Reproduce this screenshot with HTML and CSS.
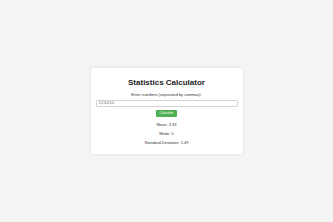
FILE: index.html
```html
<!DOCTYPE html>
<html lang="en">
<head>
<meta charset="utf-8">
<title>Statistics Calculator</title>
<link rel="stylesheet" href="styles.css">
</head>
<body>
<div class="card">
  <h1 class="title">Statistics Calculator</h1>
  <label class="label" for="nums">Enter numbers (separated by commas):</label>
  <input class="input" id="nums" type="text" value="1,2,3,4,5,5">
  <div class="actions"><button class="btn" type="button">Calculate</button></div>
  <div class="results">
    <p class="result">Mean: 3.33</p>
    <p class="result">Mode: 5</p>
    <p class="result">Standard Deviation: 1.49</p>
  </div>
</div>
</body>
</html>
```
FILE: styles.css
```css
html, body {
  margin: 0;
  height: 100%;
}
body {
  display: flex;
  align-items: center;
  justify-content: center;
  background: #f4f4f4;
  font-family: "Liberation Sans", Arial, sans-serif;
  color: #333;
}
.card {
  width: 152px;
  box-sizing: border-box;
  padding: 5px;
  background: #fff;
  border-radius: 2px;
  box-shadow: 0 0 2.5px rgba(0, 0, 0, 0.12);
  text-align: center;
}
.title {
  font-size: 8px;
  margin: 5.36px 0;
  line-height: normal;
  color: #222;
}
.label {
  display: block;
  font-size: 4px;
  line-height: normal;
  margin-bottom: 2.2px;
}
.input {
  display: block;
  width: 100%;
  box-sizing: border-box;
  height: 7.4px;
  padding: 0 2px;
  margin: 0;
  font-family: "Liberation Sans", Arial, sans-serif;
  font-size: 3.3px;
  color: #444;
  border: 0.5px solid #d4d4d4;
  border-radius: 1px;
  outline: none;
}
.actions {
  margin-top: 3px;
  display: flex;
  justify-content: center;
}
.btn {
  height: 7px;
  padding: 0 4px;
  background: #4caf50;
  color: #fff;
  border: none;
  border-radius: 1px;
  font-family: "Liberation Sans", Arial, sans-serif;
  font-size: 3.33px;
  line-height: 7px;
}
.results {
  padding-top: 1.5px;
}
.result {
  font-size: 4px;
  line-height: normal;
  margin: 4px 0;
}
```
